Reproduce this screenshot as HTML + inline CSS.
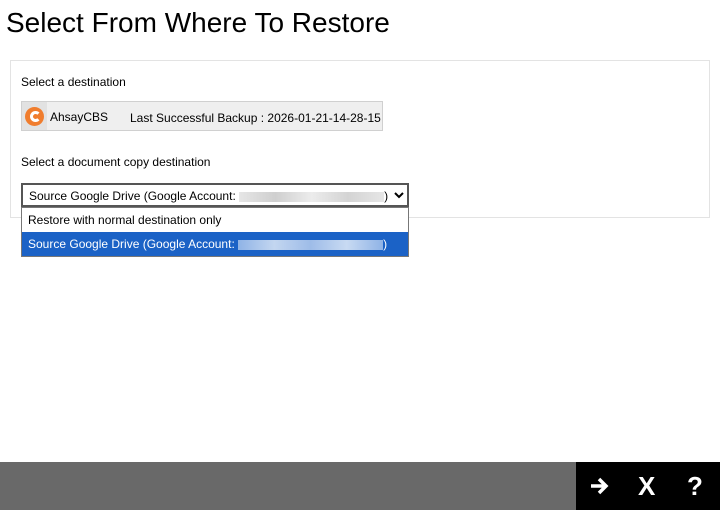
<!DOCTYPE html>
<html><head><style>
*{margin:0;padding:0;box-sizing:border-box}
body{width:720px;height:510px;background:#fff;font-family:"Liberation Sans",Arial,sans-serif;position:relative;overflow:hidden;color:#000}
.t{position:absolute;left:6px;top:7px;font-size:28px}
.panel{position:absolute;left:10px;top:60px;width:700px;height:158px;border:1px solid #e3e3e3}
.s{position:absolute;font-size:12px}
.dest{position:absolute;left:21px;top:101px;width:362px;height:30px;background:#efefef;border:1px solid #d0d0d0}
.ic{position:absolute;left:0;top:0;width:25px;height:28px;background:#e2e2e2}
.ic div{position:absolute;left:3px;top:5px;width:19px;height:19px;border-radius:50%;background:#f07d2e}
.ic div:after{content:"";position:absolute;left:5px;top:4px;width:5px;height:5px;border:3px solid #fff;border-right-color:transparent;border-radius:50%}
.sel{position:absolute;left:21px;top:183px;width:388px;height:24px;border:2px solid #555;background:#fff;font-size:12px;padding:4px 0 0 6px}
.blur{display:inline-block;width:145px;height:10px;background:linear-gradient(90deg,#e6e6e6,#cfcfcf,#ececec,#d4d4d4,#e6e6e6);vertical-align:middle}
.list{position:absolute;left:21px;top:207px;width:388px;height:50px;border:1px solid #777;background:#fff;font-size:12px}
.o1{height:24px;padding:5px 0 0 6px}
.o2{height:24px;padding:5px 0 0 6px;background:#1b62c6;color:#fff}
.o2 .blur{background:linear-gradient(90deg,#8fb3e6,#c3d6f0,#9ebce8,#c8daf2,#8fb3e6)}
.foot{position:absolute;left:0;top:462px;width:720px;height:48px;background:#696969}
.blk{position:absolute;left:576px;top:462px;width:144px;height:48px;background:#000;color:#fff;font-weight:bold;font-size:26px}
.blk span{position:absolute;top:9px}
</style></head><body>
<div class="t">Select From Where To Restore</div>
<div class="panel"></div>
<div class="s" style="left:21px;top:75px">Select a destination</div>
<div class="dest"><div class="ic"><div></div></div>
<span class="s" style="left:28px;top:8px">AhsayCBS</span>
<span class="s" style="left:108px;top:9px">Last Successful Backup : 2026-01-21-14-28-15</span></div>
<div class="s" style="left:21px;top:155px">Select a document copy destination</div>
<div class="sel">Source Google Drive (Google Account: <span class="blur"></span>)
<svg style="position:absolute;right:3px;top:6px" width="10" height="8" viewBox="0 0 10 8"><path d="M1 2l4 4 4-4" stroke="#000" stroke-width="2" fill="none"/></svg></div>
<div class="list"><div class="o1">Restore with normal destination only</div><div class="o2">Source Google Drive (Google Account: <span class="blur"></span>)</div></div>
<div class="foot"></div>
<div class="blk">
<svg style="position:absolute;left:14px;top:15px" width="20" height="18" viewBox="0 0 20 18"><path d="M1 9h15M9 2l7 7-7 7" stroke="#fff" stroke-width="3.5" fill="none"/></svg>
<span style="left:62px">X</span><span style="left:111px">?</span></div>
</body></html>
